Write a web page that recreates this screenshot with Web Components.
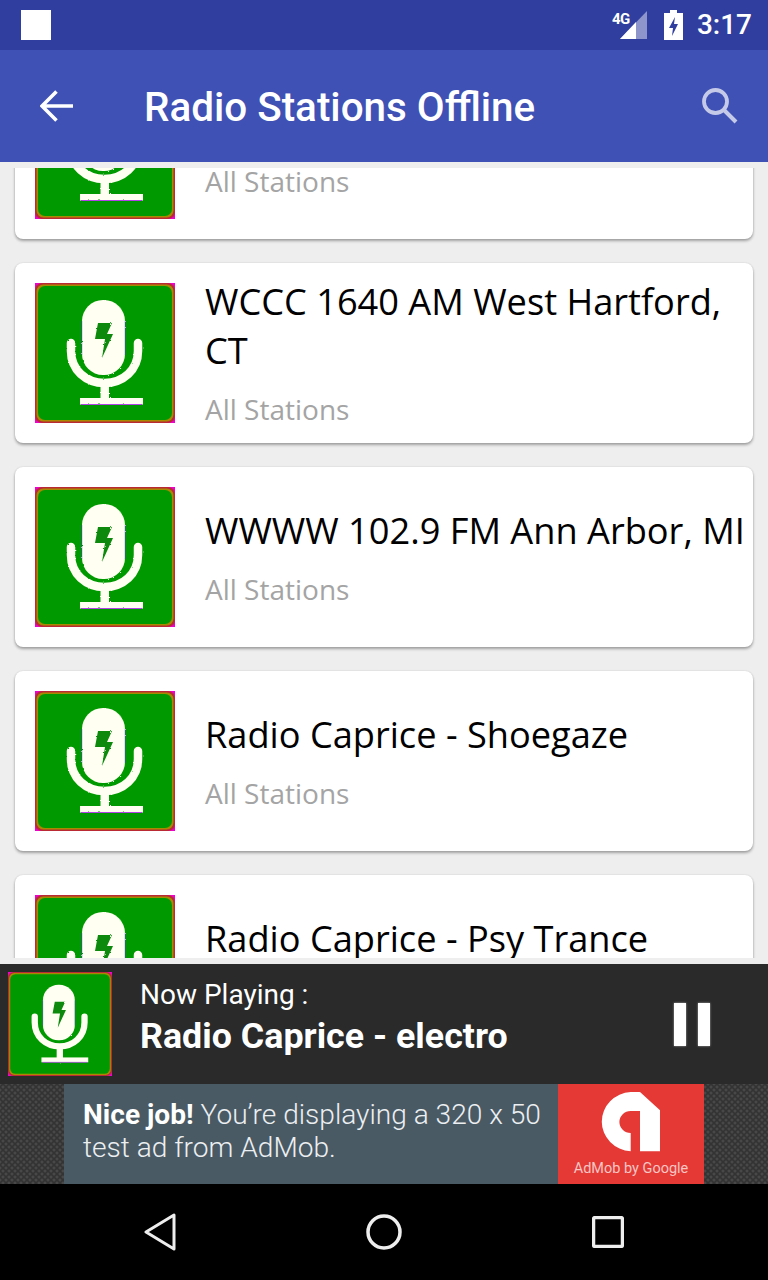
<!doctype html>
<html>
<head>
<meta charset="utf-8">
<title>Radio Stations Offline</title>
<style>
    html, body { margin: 0; padding: 0; }
    body { width: 768px; height: 1280px; overflow: hidden; font-family: Roboto, sans-serif; background: #eee; }
    app-shell { height: 1280px; }
</style>
</head>
<body>
<app-shell>
    <status-bar slot="top"></status-bar>
    <app-toolbar slot="top"><span>Radio Stations Offline</span></app-toolbar>
    <station-list>
        <!-- first and last cards are cut off by the list, only their visible text is given -->
        <station-card></station-card>
        <station-card><span slot="name">WCCC 1640 AM West Hartford, CT</span></station-card>
        <station-card><span slot="name">WWWW 102.9 FM Ann Arbor, MI</span></station-card>
        <station-card><span slot="name">Radio Caprice - Shoegaze</span></station-card>
        <station-card><span slot="name">Radio Caprice - Psy Trance</span><span slot="group"></span></station-card>
    </station-list>
    <now-playing slot="bottom"><span>Radio Caprice - electro</span></now-playing>
    <ad-banner slot="bottom"></ad-banner>
    <nav-bar slot="bottom"></nav-bar>
</app-shell>

<script>
class AppShell extends HTMLElement {
    constructor() {
        super();
        this.attachShadow({mode: 'open'});
        this.shadowRoot.innerHTML = `
            <style>
                :host { display: flex; flex-direction: column; }
                .middle { flex: 1; min-height: 0; display: flex; flex-direction: column; }
            </style>
            <slot name="top"></slot>
            <div class="middle"><slot></slot></div>
            <slot name="bottom"></slot>
        `;
    }
}

class StatusBar extends HTMLElement {
    constructor() {
        super();
        this.attachShadow({mode: 'open'});
        this.shadowRoot.innerHTML = `
            <style>
                :host { display: flex; align-items: center; height: 50px; background: #303f9f; color: #fff; padding: 0 16px 0 21px; }
                .note { width: 30px; height: 30px; background: #fff; }
                .right { margin-left: auto; display: flex; align-items: center; }
                .signal { position: relative; width: 36px; height: 30px; }
                .signal svg { position: absolute; left: 8px; top: 1px; }
                .signal span { position: absolute; left: 0; top: 1px; font: 700 15px/16px Roboto, sans-serif; letter-spacing: -.5px; }
                .battery { margin-left: 16px; display: block; }
                .time { margin-left: 14px; font: 500 28px/32px Roboto, sans-serif; }
            </style>
            <div class="note"></div>
            <div class="right">
                <div class="signal">
                    <span>4G</span>
                    <svg width="28" height="29" viewBox="0 0 28 29">
                        <path d="M27 0V28H0Z" fill="#fff" opacity=".45"/>
                        <path d="M16 11V28H0Z" fill="#fff"/>
                    </svg>
                </div>
                <svg class="battery" width="19" height="30" viewBox="0 0 19 30">
                    <path d="M6 0H13V3H19V30H0V3H6Z" fill="#fff"/>
                    <path d="M11 7L5 18H9L8 26L14 14H10Z" fill="#303f9f"/>
                </svg>
                <span class="time">3:17</span>
            </div>
        `;
    }
}

class AppToolbar extends HTMLElement {
    constructor() {
        super();
        this.attachShadow({mode: 'open'});
        this.shadowRoot.innerHTML = `
            <style>
                :host { display: flex; align-items: center; height: 112px; background: #3f51b5; color: #fff; padding: 0 30px 0 40px; }
                .back { display: block; }
                .title { margin-left: 71px; padding-top: 3px; font: 500 40.400px/48px Roboto, sans-serif; white-space: nowrap; }
                .search { margin-left: auto; display: block; }
            </style>
            <svg class="back" width="33" height="32" viewBox="0 0 33 32">
                <path d="M33 16H3M16.500 1.500L2 16L16.500 30.500" fill="none" stroke="#fff" stroke-width="3.600"/>
            </svg>
            <div class="title"><slot></slot></div>
            <svg class="search" width="36" height="36" viewBox="0 0 36 36">
                <circle cx="13.500" cy="13.500" r="11.500" fill="none" stroke="#c5cae9" stroke-width="3.800"/>
                <path d="M22 22L34 34" fill="none" stroke="#c5cae9" stroke-width="4"/>
            </svg>
        `;
    }
}

class StationIcon extends HTMLElement {
    constructor() {
        super();
        this.attachShadow({mode: 'open'});
        this.shadowRoot.innerHTML = `
            <style>
                :host { display: block; flex: none; }
                svg { display: block; width: 100%; height: 100%; }
            </style>
            <svg viewBox="0 0 140 140">
                <defs>
                    <filter id="rough" x="-10%" y="-10%" width="120%" height="120%">
                        <feTurbulence type="fractalNoise" baseFrequency=".4" numOctaves="1" seed="4" result="noise"/>
                        <feDisplacementMap in="SourceGraphic" in2="noise" scale="2.500"/>
                        <feGaussianBlur stdDeviation=".5"/>
                    </filter>
                    <filter id="soft"><feGaussianBlur stdDeviation=".5"/></filter>
                </defs>
                <rect width="140" height="140" fill="#f000d0"/>
                <rect width="140" height="140" rx="7" fill="#b92a34"/>
                <rect x="1.500" y="1.500" width="137" height="137" rx="7" fill="#a88a00"/>
                <rect x="3" y="3" width="134" height="134" rx="7" fill="#009900" filter="url(#soft)"/>
                <g filter="url(#rough)">
                    <rect x="47" y="17" width="43" height="75" rx="21" fill="#fffff2"/>
                    <path d="M36 60V68C36 87 51 100 69.500 100C88 100 103 87 103 68V60" fill="none" stroke="#fffff2" stroke-width="8.500" stroke-linecap="round"/>
                    <path d="M65.500 100H74V116H65.500Z" fill="#fffff2"/>
                    <rect x="45" y="115" width="63" height="6.500" fill="#fffff2"/>
                    <path d="M63 40H77L72 51H78L67 75L70 56H60Z" fill="#0a8a0a"/>
                </g>
                <path d="M46.800 38V72M90.200 38V72" fill="none" stroke="#4a3ec8" stroke-width="1" opacity=".55"/>
                <rect x="46" y="121" width="61" height="1" fill="#b040e8"/>
            </svg>
        `;
    }
}

class StationList extends HTMLElement {
    constructor() {
        super();
        this.attachShadow({mode: 'open'});
        this.shadowRoot.innerHTML = `
            <style>
                :host { display: flex; flex: 1; min-height: 0; background: #eee; padding: 6px 0; }
                .viewport { flex: 1; overflow: hidden; }
                .scroller { display: flex; flex-direction: column; gap: 24px; padding: 0 15px; margin-top: -109px; }
            </style>
            <div class="viewport"><div class="scroller"><slot></slot></div></div>
        `;
    }
}

class StationCard extends HTMLElement {
    constructor() {
        super();
        this.attachShadow({mode: 'open'});
        this.shadowRoot.innerHTML = `
            <style>
                :host { display: flex; align-items: center; box-sizing: border-box; height: 180px; background: #fff; border-radius: 8px;
                    box-shadow: 0 2px 3px rgba(0,0,0,.32), 0 0 2px rgba(0,0,0,.12); padding-left: 20px; }
                station-icon { width: 140px; height: 140px; }
                .text { margin-left: 30px; min-width: 0; flex: 1; margin-top: -1px; }
                .name { min-height: 49px; font: 400 36.200px/49px "Open Sans", sans-serif; color: #000; }
                .group { min-height: 38px; margin-top: 15px; font: 400 28px/38px "Open Sans", sans-serif; color: #a4a4a4; }
            </style>
            <station-icon></station-icon>
            <div class="text">
                <div class="name"><slot name="name"></slot></div>
                <div class="group"><slot name="group">All Stations</slot></div>
            </div>
        `;
    }
}

class NowPlaying extends HTMLElement {
    constructor() {
        super();
        this.attachShadow({mode: 'open'});
        this.shadowRoot.innerHTML = `
            <style>
                :host { display: flex; align-items: center; height: 120px; background: #2a2a2a; color: #fff; padding: 0 58px 0 8px; }
                station-icon { width: 104px; height: 104px; }
                .text { margin: -13px 0 0 28px; }
                .label { font: 400 28px/32px Roboto, sans-serif; }
                .track { margin-top: 4px; font: 700 35.800px/42px Roboto, sans-serif; }
                .pause { margin-left: auto; display: flex; gap: 12px; }
                .pause i { display: block; width: 12px; height: 43px; background: #fff; box-shadow: 0 0 2px rgba(255,255,255,.6); }
            </style>
            <station-icon></station-icon>
            <div class="text">
                <div class="label">Now Playing :</div>
                <div class="track"><slot></slot></div>
            </div>
            <div class="pause"><i></i><i></i></div>
        `;
    }
}

class AdBanner extends HTMLElement {
    constructor() {
        super();
        this.attachShadow({mode: 'open'});
        this.shadowRoot.innerHTML = `
            <style>
                :host { display: flex; justify-content: center; height: 100px; background-color: #333;
                    background-image: radial-gradient(circle, #484848 1.200px, transparent 1.800px), radial-gradient(circle, #484848 1.200px, transparent 1.800px);
                    background-size: 6px 6px; background-position: 0 0, 3px 3px; }
                .copy { box-sizing: border-box; width: 494px; background: #4a5a65; padding: 14px 0 0 19px; font: 300 28.100px/33px Roboto, sans-serif; color: #eceff1; white-space: nowrap; }
                .copy b { font-weight: 700; color: #fff; }
                .logo { width: 146px; background: #e53935; display: flex; flex-direction: column; align-items: center; }
                .logo svg { display: block; margin: 8px 2px 0 0; }
                .logo span { margin-top: 7px; font: 400 14.500px/20px Roboto, sans-serif; color: #f6c6c4; white-space: nowrap; }
            </style>
            <div class="copy"><b>Nice job!</b> You’re displaying a 320 x 50<br>test ad from AdMob.</div>
            <div class="logo">
                <svg width="60" height="60" viewBox="0 0 60 60">
                    <path d="M30.700 0H40L60 18.300V59.300H40V19H30.700A11.300 11 0 0 0 30.700 41V59.300A30.700 29.700 0 0 1 30.700 0Z" fill="#fff"/>
                </svg>
                <span>AdMob by Google</span>
            </div>
        `;
    }
}

class NavBar extends HTMLElement {
    constructor() {
        super();
        this.attachShadow({mode: 'open'});
        this.shadowRoot.innerHTML = `
            <style>
                :host { display: flex; align-items: center; justify-content: space-between; height: 96px; background: #000; padding: 0 144px; }
                svg { display: block; }
            </style>
            <svg width="32" height="40" viewBox="0 0 32 40">
                <path d="M30 3V37L2 20Z" fill="none" stroke="#eee" stroke-width="3" stroke-linejoin="round"/>
            </svg>
            <svg width="36" height="36" viewBox="0 0 36 36">
                <circle cx="18" cy="18" r="16" fill="none" stroke="#eee" stroke-width="3.500"/>
            </svg>
            <svg width="32" height="32" viewBox="0 0 32 32">
                <rect x="1.500" y="1.500" width="29" height="29" rx="2" fill="none" stroke="#eee" stroke-width="3.500"/>
            </svg>
        `;
    }
}

customElements.define('app-shell', AppShell);
customElements.define('status-bar', StatusBar);
customElements.define('app-toolbar', AppToolbar);
customElements.define('station-icon', StationIcon);
customElements.define('station-list', StationList);
customElements.define('station-card', StationCard);
customElements.define('now-playing', NowPlaying);
customElements.define('ad-banner', AdBanner);
customElements.define('nav-bar', NavBar);
</script>
</body>
</html>
